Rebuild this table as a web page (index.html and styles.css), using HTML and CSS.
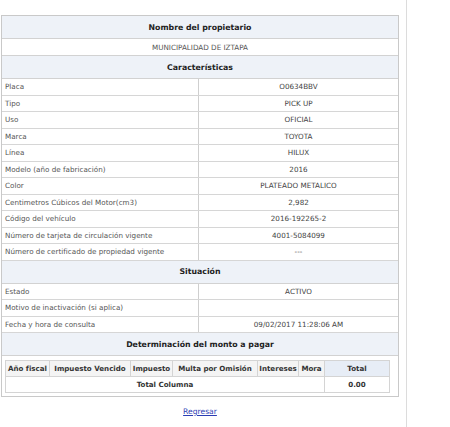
FILE: index.html
```html
<!DOCTYPE html>
<html lang="es">
<head>
<meta charset="utf-8">
<title>Consulta de vehículo</title>
<link rel="stylesheet" href="styles.css">
</head>
<body>
<div class="page">
  <div class="sheet">
    <div class="hdr">Nombre del propietario</div>
    <div class="full">MUNICIPALIDAD DE IZTAPA</div>
    <div class="hdr">Características</div>
    <div class="row"><div class="k">Placa</div><div class="v">O0634BBV</div></div>
    <div class="row"><div class="k">Tipo</div><div class="v">PICK UP</div></div>
    <div class="row"><div class="k">Uso</div><div class="v">OFICIAL</div></div>
    <div class="row"><div class="k">Marca</div><div class="v">TOYOTA</div></div>
    <div class="row"><div class="k">Línea</div><div class="v">HILUX</div></div>
    <div class="row"><div class="k">Modelo (año de fabricación)</div><div class="v">2016</div></div>
    <div class="row"><div class="k">Color</div><div class="v">PLATEADO METALICO</div></div>
    <div class="row"><div class="k">Centimetros Cúbicos del Motor(cm3)</div><div class="v">2,982</div></div>
    <div class="row"><div class="k">Código del vehículo</div><div class="v">2016-192265-2</div></div>
    <div class="row"><div class="k">Número de tarjeta de circulación vigente</div><div class="v">4001-5084099</div></div>
    <div class="row"><div class="k">Número de certificado de propiedad vigente</div><div class="v">---</div></div>
    <div class="hdr">Situación</div>
    <div class="row"><div class="k">Estado</div><div class="v">ACTIVO</div></div>
    <div class="row"><div class="k">Motivo de inactivación (si aplica)</div><div class="v"></div></div>
    <div class="row"><div class="k">Fecha y hora de consulta</div><div class="v">09/02/2017 11:28:06 AM</div></div>
    <div class="hdr">Determinación del monto a pagar</div>
    <div class="calc">
      <table class="calc-table">
        <colgroup>
          <col class="c1"><col class="c2"><col class="c3"><col class="c4"><col class="c5"><col class="c6"><col class="c7">
        </colgroup>
        <thead>
          <tr>
            <th>Año fiscal</th><th>Impuesto Vencido</th><th>Impuesto</th><th>Multa por Omisión</th><th>Intereses</th><th>Mora</th><th class="tot">Total</th>
          </tr>
        </thead>
        <tbody>
          <tr>
            <td colspan="6" class="sum">Total Columna</td><td class="sum">0.00</td>
          </tr>
        </tbody>
      </table>
    </div>
  </div>
  <div class="back"><a href="#">Regresar</a></div>
</div>
</body>
</html>
```

FILE: styles.css
```css
* { box-sizing: border-box; }
html, body { margin: 0; padding: 0; background: #fff; }
body { font-family: "DejaVu Sans", Verdana, sans-serif; color: #555; }

.page {
  width: 407px;
  min-height: 427px;
  border-right: 1px solid #dcdcdc;
  padding-top: 15px;
  padding-left: 1px;
}

.sheet {
  width: 398px;
  border: 1px solid #c9c9c9;
}

.hdr {
  height: 23px;
  display: flex;
  align-items: center;
  justify-content: center;
  background: #eef2f8;
  border-bottom: 1px solid #d2d2d2;
  font-size: 7.8px;
  font-weight: bold;
  color: #222;
}

.full {
  height: 17px;
  display: flex;
  align-items: center;
  justify-content: center;
  border-bottom: 1px solid #d2d2d2;
  font-size: 7.2px;
  color: #555;
}

.row {
  height: 16.5px;
  display: flex;
  border-bottom: 1px solid #d6d6d6;
  font-size: 7.2px;
}

.k {
  width: 197px;
  border-right: 1px solid #cfcfcf;
  display: flex;
  align-items: center;
  padding-left: 3px;
  color: #555;
}

.v {
  flex: 1;
  display: flex;
  align-items: center;
  justify-content: center;
  color: #444;
}

.calc {
  padding: 4px 0 3px 3px;
}

.calc-table {
  width: 384px;
  table-layout: fixed;
  border-collapse: collapse;
  border: 1px solid #cfcfcf;
}

.c1 { width: 44px; }
.c2 { width: 81px; }
.c3 { width: 42px; }
.c4 { width: 85px; }
.c5 { width: 41px; }
.c6 { width: 26px; }
.c7 { width: 65px; }

.calc-table th,
.calc-table td {
  height: 16px;
  padding: 0;
  border: 1px solid #d4d4d4;
  font-size: 7.1px;
  font-weight: bold;
  color: #333;
  text-align: center;
  white-space: nowrap;
  overflow: hidden;
}

.calc-table th { background: #f4f4f4; }
.calc-table th.tot { background: #e7edf6; }
.calc-table td { background: #fff; }

.back {
  width: 398px;
  margin-top: 10px;
  text-align: center;
  line-height: 10px;
  font-size: 7.6px;
}

.back a {
  color: #2b3cb3;
  text-decoration: underline;
}
```
